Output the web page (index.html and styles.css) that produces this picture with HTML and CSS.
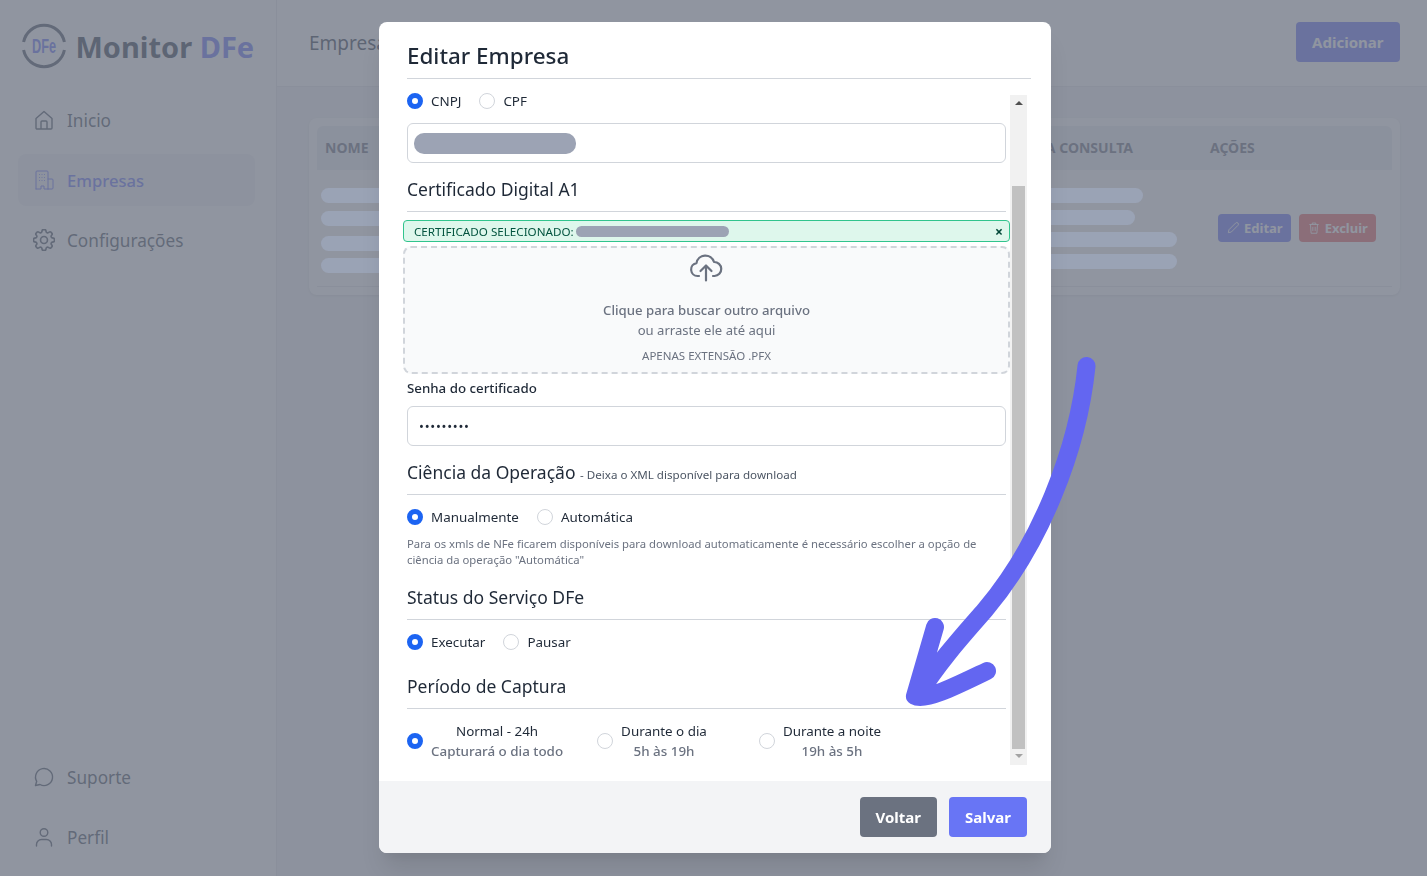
FILE: index.html
```
<!DOCTYPE html>
<html>
<head>
<meta http-equiv="content-type" content="text/html; charset=utf-8" />
<title>Monitor DFe</title>
<link rel="stylesheet" href="styles.css">
</head>
<body>
<div class="app">
	<aside class="sidebar">
		<div class="logo">
			<svg class="logo-mark" viewBox="0 0 44 44" width="44" height="44">
				<path d="M1.6 18A20.8 20.8 0 0 1 42.4 18M42.4 26A20.8 20.8 0 0 1 1.6 26" fill="none" stroke="#4b5563" stroke-width="3"/>
				<text x="22" y="29" text-anchor="middle" textLength="24" lengthAdjust="spacingAndGlyphs" class="logo-mark-text">DFe</text>
			</svg>
			<span class="logo-text">Monitor <span class="logo-accent">DFe</span></span>
		</div>
		<nav class="nav">
			<a class="nav-item">
				<svg class="icon" viewBox="1 1 22 22"><path d="M4 10.500 12 3.500l8 7V20a1 1 0 0 1-1 1H5a1 1 0 0 1-1-1zM9 21v-7a1 1 0 0 1 1-1h4a1 1 0 0 1 1 1v7"/></svg>
				Inicio
			</a>
			<a class="nav-item active">
				<svg class="icon icon-thin" viewBox="1 1 22 22"><path d="M4 21V4a1 1 0 0 1 1-1h10a1 1 0 0 1 1 1v17M16 11h4a1 1 0 0 1 1 1v8a1 1 0 0 1-1 1h-4M4 21h5v-3h3v3h4M7.500 6.500h.01M10 6.500h.01M12.500 6.500h.01M7.500 9.500h.01M10 9.500h.01M12.500 9.500h.01M7.500 12.500h.01M10 12.500h.01M12.500 12.500h.01"/></svg>
				Empresas
			</a>
			<a class="nav-item">
				<svg class="icon" viewBox="2.500 2.500 19 19"><path d="M10.343 3.94c.09-.542.56-.94 1.11-.94h1.093c.55 0 1.02.398 1.11.94l.149.894c.07.424.384.764.78.93.398.164.855.142 1.205-.108l.737-.527a1.125 1.125 0 0 1 1.45.12l.773.774c.39.389.44 1.002.12 1.45l-.527.737c-.25.35-.272.806-.107 1.204.165.397.505.71.93.78l.893.15c.543.09.94.56.94 1.109v1.094c0 .55-.397 1.02-.94 1.11l-.893.149c-.425.07-.765.383-.93.78-.165.398-.143.854.107 1.204l.527.738c.32.447.269 1.06-.12 1.45l-.774.773a1.125 1.125 0 0 1-1.449.12l-.738-.527c-.35-.25-.806-.272-1.203-.107-.397.165-.71.505-.781.929l-.149.894c-.09.542-.56.94-1.11.94h-1.094c-.55 0-1.019-.398-1.11-.94l-.148-.894c-.071-.424-.384-.764-.781-.93-.398-.164-.854-.142-1.204.108l-.738.527c-.447.32-1.06.269-1.45-.12l-.773-.774a1.125 1.125 0 0 1-.12-1.45l.527-.737c.25-.35.273-.806.108-1.204-.165-.397-.506-.71-.93-.78l-.894-.15c-.542-.09-.94-.56-.94-1.109v-1.094c0-.55.398-1.02.94-1.11l.894-.149c.424-.07.765-.383.93-.78.165-.398.143-.854-.107-1.204l-.527-.738a1.125 1.125 0 0 1 .12-1.45l.773-.773a1.125 1.125 0 0 1 1.45-.12l.737.527c.35.25.807.272 1.204.107.397-.165.71-.505.78-.929l.15-.894Z"/><circle cx="12" cy="12" r="3"/></svg>
				Configurações
			</a>
		</nav>
		<nav class="nav nav-bottom">
			<a class="nav-item">
				<svg class="icon" viewBox="1 1 22 22"><path d="M3.500 20.500 4.700 16.300A8.500 8.500 0 1 1 8 19.500Z"/></svg>
				Suporte
			</a>
			<a class="nav-item">
				<svg class="icon" viewBox="1 1 22 22"><circle cx="12" cy="7.500" r="3.800"/><path d="M4.500 21v-1.500a5 5 0 0 1 5-5h5a5 5 0 0 1 5 5V21"/></svg>
				Perfil
			</a>
		</nav>
	</aside>
	<main class="main">
		<header class="topbar">
			<h1 class="page-title">Empresas</h1>
			<button class="btn btn-primary">Adicionar</button>
		</header>
		<section class="card">
			<div class="table-head">
				<span class="col-nome">NOME</span>
				<span class="col-consulta">ÚLTIMA CONSULTA</span>
				<span class="col-acoes">AÇÕES</span>
			</div>
			<div class="table-row">
				<div class="col-nome bars-nome">
					<span class="bar"></span>
					<span class="bar"></span>
					<span class="bar"></span>
					<span class="bar"></span>
				</div>
				<div class="col-consulta bars-consulta">
					<span class="bar bar-a"></span>
					<span class="bar bar-b"></span>
					<span class="bar bar-c"></span>
					<span class="bar bar-c"></span>
				</div>
				<div class="col-acoes row-actions">
					<button class="btn-small btn-edit">
						<svg class="icon-small" viewBox="0 0 24 24"><path d="M4 20l1-5L16.500 3.500a2.500 2.500 0 0 1 4 4L9 19z"/></svg>
						Editar
					</button>
					<button class="btn-small btn-delete">
						<svg class="icon-small" viewBox="0 0 24 24"><path d="M4 6h16M9 6V3.500h6V6M6 6l1 15h10l1-15M10 10v7M14 10v7"/></svg>
						Excluir
					</button>
				</div>
			</div>
		</section>
	</main>
</div>

<div class="backdrop"></div>

<div class="modal-wrap">
	<div class="modal">
		<div class="modal-top">
			<h2 class="modal-title">Editar Empresa</h2>
		</div>
		<div class="modal-scroll">
			<div class="form">
				<div class="radios radios-first">
					<label class="radio"><i class="dot on"></i>CNPJ</label>
					<label class="radio"><i class="dot"></i>CPF</label>
				</div>
				<div class="input"><span class="redact redact-doc"></span></div>

				<h3 class="section section-cert">Certificado Digital A1</h3>
				<div class="file-banner">
					<span>CERTIFICADO SELECIONADO:</span>
					<span class="redact redact-file"></span>
					<span class="file-close">×</span>
				</div>
				<div class="dropzone">
					<svg class="upload" viewBox="0 0 34 28"><path d="M10 22H8.500a6.500 6.500 0 0 1-1-12.900A9 9 0 0 1 25 8a7 7 0 0 1 .5 14H24M17 26.500V12M11.500 17 17 11.500 22.500 17"/></svg>
					<p class="drop-main">Clique para buscar outro arquivo</p>
					<p class="drop-sub">ou arraste ele até aqui</p>
					<p class="drop-note">APENAS EXTENSÃO .PFX</p>
				</div>

				<label class="field-label">Senha do certificado</label>
				<div class="input input-pass">•••••••••</div>

				<h3 class="section section-ciencia">Ciência da Operação <small>- Deixa o XML disponível para download</small></h3>
				<div class="radios">
					<label class="radio"><i class="dot on"></i>Manualmente</label>
					<label class="radio"><i class="dot"></i>Automática</label>
				</div>
				<p class="hint">Para os xmls de NFe ficarem disponíveis para download automaticamente é necessário escolher a opção de ciência da operação "Automática"</p>

				<h3 class="section section-status">Status do Serviço DFe</h3>
				<div class="radios">
					<label class="radio"><i class="dot on"></i>Executar</label>
					<label class="radio"><i class="dot"></i>Pausar</label>
				</div>

				<h3 class="section section-periodo">Período de Captura</h3>
				<div class="periods">
					<label class="radio"><i class="dot on"></i><span class="period-text">Normal - 24h<em>Capturará o dia todo</em></span></label>
					<label class="radio"><i class="dot"></i><span class="period-text">Durante o dia<em>5h às 19h</em></span></label>
					<label class="radio"><i class="dot"></i><span class="period-text">Durante a noite<em>19h às 5h</em></span></label>
				</div>
			</div>
			<div class="scrollbar">
				<span class="arrow-up"></span>
				<span class="thumb"></span>
				<span class="arrow-down"></span>
			</div>
		</div>
		<div class="modal-footer">
			<button class="btn btn-back">Voltar</button>
			<button class="btn btn-save">Salvar</button>
		</div>
	</div>
</div>

<svg class="big-arrow" width="1427" height="876" viewBox="0 0 1427 876">
	<path d="M1086.500 366C1078 450 1040 545 985 610C965 633 940 660 918 695M935 627 915 696C925 702 960 684 987 671" fill="none" stroke="#6366f1" stroke-width="18" stroke-linecap="round" stroke-linejoin="round"/>
</svg>
</body>
</html>
```
FILE: styles.css
```
* {
	box-sizing: border-box;
}
html, body {
	margin: 0;
	height: 100%;
	overflow: hidden;
}
body {
	font-family: "Noto Sans", "Open Sans", sans-serif;
	color: #1f2937;
	background: #fff;
}
h1, h2, h3, p {
	margin: 0;
	font-weight: 400;
}
button {
	font-family: inherit;
	border: 0;
}

/* page under the modal */
.app {
	display: flex;
	height: 876px;
}
.sidebar {
	width: 277px;
	flex: none;
	display: flex;
	flex-direction: column;
	padding: 0 21px 0 18px;
	background: #fff;
	border-right: 1px solid #e5e7eb;
}
.logo {
	display: flex;
	align-items: center;
	height: 92px;
	padding-left: 4px;
	gap: 9.500px;
}
.logo-mark {
	overflow: visible;
}
.logo-mark-text {
	font-family: "Liberation Sans", sans-serif;
	font-weight: 700;
	font-size: 20px;
	fill: #6875f5;
}
.logo-text {
	font-size: 29px;
	font-weight: 700;
	color: #374151;
}
.logo-accent {
	color: #6875f5;
}
.nav {
	display: flex;
	flex-direction: column;
	gap: 8px;
	margin-top: 2px;
}
.nav-bottom {
	margin-top: auto;
	margin-bottom: 13px;
}
.nav-item {
	display: flex;
	align-items: center;
	gap: 12px;
	height: 52px;
	padding-left: 15px;
	font-size: 17.200px;
	color: #4b5563;
	border-radius: 8px;
}
.nav-item.active {
	background: #f3f4f6;
	color: #6875f5;
	font-size: 16.600px;
	font-weight: 500;
}
.icon {
	width: 22px;
	height: 22px;
	fill: none;
	stroke: currentColor;
	stroke-width: 1.4;
	stroke-linecap: round;
	stroke-linejoin: round;
}
.icon-thin {
	stroke-width: 1;
}
.main {
	flex: 1;
	background: #f3f4f6;
}
.topbar {
	display: flex;
	align-items: center;
	justify-content: space-between;
	height: 87px;
	padding: 0 27px 3px 32px;
	background: #fff;
	border-bottom: 1px solid #e5e7eb;
}
.page-title {
	margin-top: 3px;
	font-size: 19px;
	color: #374151;
}
.btn {
	height: 40px;
	padding: 0 16px;
	font-size: 15px;
	font-weight: 700;
	color: #fff;
	border-radius: 4px;
}
.btn-primary {
	padding: 0 16.500px;
	background: #6875f5;
}
.card {
	margin: 31px 27px 0 32px;
	height: 177px;
	padding: 8px;
	background: #fff;
	border-radius: 8px;
	box-shadow: 0 1px 3px rgba(0,0,0,0.1);
}
.table-head {
	display: flex;
	align-items: center;
	height: 44px;
	padding-bottom: 2px;
	background: #eceef1;
	font-size: 14px;
	font-weight: 700;
	color: #6b7280;
	border-radius: 6px 6px 0 0;
}
.col-nome {
	width: 720px;
	padding-left: 8px;
}
.col-consulta {
	width: 173px;
}
.col-acoes {
	flex: 1;
}
.table-head .col-nome {
	width: 684px;
}
.table-head .col-consulta {
	width: 209px;
}
.table-row {
	display: flex;
	align-items: flex-start;
	height: 117px;
	border-bottom: 1px solid #e5e7eb;
}
.bars-nome, .bars-consulta {
	display: flex;
	flex-direction: column;
	padding-top: 18px;
}
.bars-nome {
	padding-left: 4px;
}
.bar {
	position: relative;
	z-index: 20;
	display: block;
	height: 15px;
	border-radius: 8px;
	background: #9aa3b5;
	margin-bottom: 7px;
}
.bars-nome .bar {
	width: 100px;
	margin-bottom: 8px;
}
.bars-nome .bar:nth-child(2) {
	margin-bottom: 10px;
}
.bars-nome .bar:nth-child(3) {
	margin-bottom: 7px;
}
.bars-consulta .bar-a {
	width: 106px;
}
.bars-consulta .bar-b {
	width: 98px;
}
.bars-consulta .bar-c {
	width: 140px;
}
.row-actions {
	display: flex;
	gap: 8px;
	padding: 44px 0 0 0;
	margin-left: 8px;
}
.btn-small {
	display: flex;
	align-items: center;
	gap: 4px;
	height: 28px;
	padding: 0 8px;
	font-size: 13px;
	font-weight: 700;
	color: #fff;
	border-radius: 4px;
}
.btn-edit {
	background: #6875f5;
}
.btn-delete {
	background: #e02424;
	opacity: 0.7;
}
.icon-small {
	width: 14px;
	height: 14px;
	fill: none;
	stroke: currentColor;
	stroke-width: 1.6;
	stroke-linejoin: round;
}

/* modal */
.backdrop {
	position: fixed;
	inset: 0;
	z-index: 10;
	background: rgba(107,114,128,0.75);
}
.modal-wrap {
	position: fixed;
	inset: 0;
	z-index: 30;
	display: flex;
	justify-content: center;
	padding: 22px 0 0 3px;
}
.modal {
	width: 672px;
	height: 831px;
	display: flex;
	flex-direction: column;
	background: #fff;
	border-radius: 8px;
	overflow: hidden;
	box-shadow: 0 20px 25px -5px rgba(0,0,0,0.1), 0 10px 10px -5px rgba(0,0,0,0.04);
}
.modal-top {
	padding: 0 20px 0 28px;
}
.modal-title {
	height: 57px;
	padding-top: 16px;
	font-size: 22.400px;
	line-height: 36px;
	font-weight: 500;
	color: #1f2937;
	border-bottom: 1px solid #d1d5db;
}
.modal-scroll {
	display: flex;
	height: 670px;
	margin-top: 16px;
	margin-bottom: 16px;
	padding-right: 24px;
}
.form {
	flex: 1;
	padding: 0 4px 0 28px;
	font-size: 13.400px;
	color: #1f2937;
	min-width: 0;
}
.radios {
	display: flex;
	gap: 18px;
	height: 20px;
	margin-top: 12px;
}
.radios-first {
	margin-top: -4px;
}
.radio {
	display: flex;
	align-items: center;
	gap: 8px;
	line-height: 20px;
}
.dot {
	display: block;
	width: 16px;
	height: 16px;
	flex: none;
	background: #fff;
	border: 1px solid #d1d5db;
	border-radius: 50%;
}
.dot.on {
	border: 5px solid #1c64f2;
}
.input {
	display: flex;
	align-items: center;
	height: 40px;
	margin-top: 12px;
	padding: 0 6px;
	border: 1px solid #d1d5db;
	border-radius: 6px;
}
.input-pass {
	margin-top: 8px;
	padding: 0 11px;
	font-size: 13px;
	letter-spacing: 0.75px;
}
.redact {
	display: inline-block;
	background: #9ca3b4;
}
.redact-doc {
	width: 162px;
	height: 21px;
	border-radius: 10px;
}
.section {
	font-size: 17.500px;
	line-height: 24px;
	color: #1f2937;
	padding-bottom: 9px;
	border-bottom: 1px solid #d1d5db;
}
.section small {
	font-size: 11.600px;
	color: #4b5563;
}
.section-cert {
	margin-top: 14px;
	height: 35px;
}
.file-banner {
	display: flex;
	align-items: center;
	width: 607px;
	height: 22px;
	margin: 8px 0 0 -4px;
	padding: 0 6px 0 10px;
	font-size: 11.650px;
	color: #03543f;
	background: #def7ec;
	border: 1px solid #31c48d;
	border-radius: 4px;
}
.redact-file {
	width: 153px;
	height: 11px;
	margin-left: 2px;
	border-radius: 6px;
}
.file-close {
	margin-left: auto;
	font-size: 14px;
	font-weight: 700;
	color: #014737;
}
.dropzone {
	display: flex;
	flex-direction: column;
	align-items: center;
	width: 607px;
	height: 128px;
	margin: 4px 0 0 -4px;
	background: #f9fafb;
	border: 2px dashed #d1d5db;
	border-radius: 8px;
	color: #6b7280;
	text-align: center;
}
.upload {
	width: 34px;
	height: 28px;
	margin-top: 6px;
	margin-left: -2px;
	fill: none;
	stroke: #6b7280;
	stroke-width: 2.200;
	stroke-linecap: round;
	stroke-linejoin: round;
}
.drop-main {
	margin-top: 18px;
	font-weight: 500;
	font-size: 13.200px;
	line-height: 20px;
}
.drop-sub {
	font-size: 13.100px;
	line-height: 20px;
}
.drop-note {
	margin-top: 8px;
	font-size: 11.500px;
	line-height: 16px;
}
.field-label {
	display: block;
	margin-top: 4px;
	font-size: 13.300px;
	line-height: 20px;
	font-weight: 500;
}
.section-ciencia {
	margin-top: 14px;
	height: 35px;
}
.hint {
	margin-top: 9px;
	font-size: 11.300px;
	line-height: 16px;
	color: #6b7280;
}
.section-status {
	margin-top: 17px;
	height: 35px;
}
.section-periodo {
	margin-top: 22px;
	height: 35px;
}
.periods {
	display: flex;
	margin-top: 12px;
	height: 40px;
}
.periods .radio {
	margin-right: 34px;
}
.periods .radio:nth-child(2) {
	margin-right: 52px;
}
.period-text {
	display: block;
	text-align: center;
	line-height: 20px;
}
.period-text em {
	display: block;
	font-style: normal;
	font-weight: 500;
	color: #6b7280;
}
.scrollbar {
	position: relative;
	width: 17px;
	flex: none;
	display: flex;
	flex-direction: column;
	align-items: center;
	background: #f1f1f1;
}
.arrow-up, .arrow-down {
	display: block;
	width: 0;
	height: 0;
	border-left: 4px solid transparent;
	border-right: 4px solid transparent;
}
.arrow-up {
	margin-top: 6px;
	border-bottom: 4px solid #505050;
}
.arrow-down {
	margin-top: 5px;
	border-top: 4px solid #a3a3a3;
}
.thumb {
	display: block;
	width: 13px;
	height: 563px;
	margin-top: 81px;
	background: #c1c1c1;
}
.modal-footer {
	display: flex;
	justify-content: flex-end;
	gap: 12px;
	height: 72px;
	padding: 16px 24px;
	background: #f3f4f6;
}
.btn-back {
	background: #6b7280;
}
.btn-save {
	background: #6875f5;
}

/* hand drawn arrow over everything */
.big-arrow {
	position: fixed;
	left: 0;
	top: 0;
	z-index: 40;
	pointer-events: none;
}
```
